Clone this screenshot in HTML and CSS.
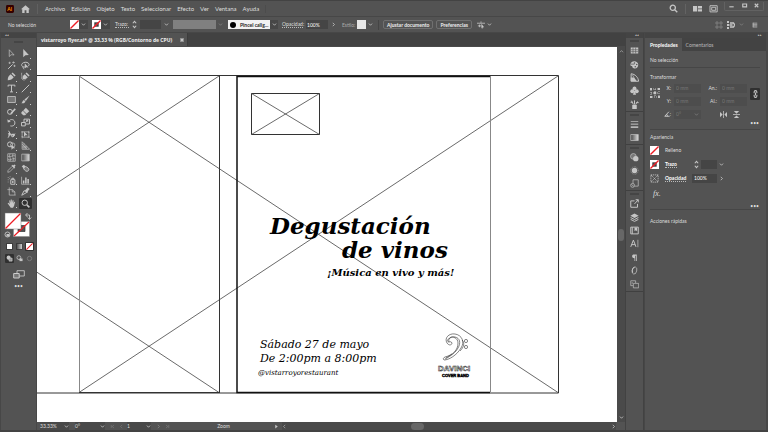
FILE: index.html
```html
<!DOCTYPE html>
<html lang="es">
<head>
<meta charset="utf-8">
<title>vistarroyo flyer.ai</title>
<link rel="stylesheet" href="styles.css">
</head>
<body>
<svg class="defs" aria-hidden="true">
  <symbol id="down" viewBox="0 0 8 8"><path d="M1.5 2.5 4 5.2 6.5 2.5" class="l2"/></symbol>
  <symbol id="right" viewBox="0 0 8 8"><path d="M2.8 1.3 5.5 4 2.8 6.7" class="l2"/></symbol>
  <symbol id="left" viewBox="0 0 8 8"><path d="M5.2 1.3 2.5 4 5.2 6.7" class="l"/></symbol>
  <symbol id="up" viewBox="0 0 8 8"><path d="M1.5 5.2 4 2.5 6.5 5.2" class="l"/></symbol>
  <symbol id="spin" viewBox="0 0 6 10"><path d="M1 3.5 3 1.2 5 3.5M1 6.5 3 8.8 5 6.5" class="l2"/></symbol>
  <symbol id="first" viewBox="0 0 8 8"><path d="M2 1.5v5M6.5 1.5 3.5 4l3 2.5" class="l"/></symbol>
  <symbol id="last" viewBox="0 0 8 8"><path d="M6 1.5v5M1.5 1.5l3 2.5-3 2.5" class="l"/></symbol>
  <symbol id="nofill" viewBox="0 0 10 10"><path fill="#fff" d="M0 0h10v10H0z"/><path d="M.5 9.5 9.5.5" stroke="#ed1c24" stroke-width="1.5"/></symbol>
  <symbol id="nostroke" viewBox="0 0 10 10"><path fill="#fff" d="M0 0h10v10H0z"/><path fill="#333" d="M2.6 2.6h4.8v4.8H2.6z"/><path fill="#999" d="M4 4h2v2H4z"/><path d="M.5 9.5 9.5.5" stroke="#ed1c24" stroke-width="1.5"/></symbol>
</svg>

<header class="menubar">
  <svg class="logo" viewBox="0 0 8 8"><rect width="8" height="8" rx="1.4" fill="#330000"/><text x="1.2" y="6" class="logotext">Ai</text></svg>
  <button class="home" aria-label="Inicio"><svg viewBox="0 0 9 8"><path class="f" d="M4.5.2 0 4.3h1.2V8h2.4V5.2h1.8V8h2.4V4.3H9z"/></svg></button>
  <nav class="menus">
    <button>Archivo</button><button>Edición</button><button>Objeto</button><button>Texto</button><button>Seleccionar</button><button>Efecto</button><button>Ver</button><button>Ventana</button><button>Ayuda</button>
  </nav>
  <div class="headicons">
    <button aria-label="Buscar"><svg viewBox="0 0 9 9"><circle cx="3.8" cy="3.8" r="2.6" class="l2"/><path d="M5.7 5.7 8.3 8.3" class="l2"/></svg></button>
    <i class="vsep"></i>
    <button aria-label="Espacio de trabajo"><svg viewBox="0 0 9 9"><path class="f" d="M0 2h4.2v5.6H0zM5 2h4v2.4H5zM5 5.2h4v2.4H5z"/></svg></button>
    <button aria-label="Pantalla"><svg viewBox="0 0 9 9"><path class="l" d="M1 1.7h7.2v6.2H1z"/><path class="l" d="M2.7 3.3h4v3h-4z"/></svg></button>
  </div>
  <div class="winbtns">
    <button aria-label="Minimizar"><svg viewBox="0 0 8 8"><path d="M1.5 5.5h5" class="l2"/></svg></button>
    <button aria-label="Restaurar"><svg viewBox="0 0 8 8"><path d="M2 2.3h4.4v3.2H2z" class="l2"/></svg></button>
    <button aria-label="Cerrar"><svg viewBox="0 0 8 8"><path d="m2 2 4 4M6 2 2 6" class="l2"/></svg></button>
  </div>
</header>

<section class="control">
  <span class="selection">No selección</span>
  <button class="swatch" aria-label="Relleno"><svg class="sw"><use href="#nofill"/></svg><svg class="car"><use href="#down"/></svg></button>
  <button class="swatch" aria-label="Trazo"><svg class="sw"><use href="#nostroke"/></svg><svg class="car"><use href="#down"/></svg></button>
  <div class="combo stroke"><label for="trazo" class="dotted">Trazo:</label><svg class="spin"><use href="#spin"/></svg><input id="trazo"><svg class="car"><use href="#down"/></svg></div>
  <div class="combo profile"><span class="greybar"></span><svg class="car dim"><use href="#down"/></svg></div>
  <button class="brush"><span class="brushname"><i></i>Pincel calig...</span><svg class="car"><use href="#down"/></svg></button>
  <div class="combo opac"><label for="opa" class="dotted">Opacidad:</label><input id="opa" value="100%"><svg class="car"><use href="#right"/></svg></div>
  <button class="style"><span>Estilo:</span><i></i><svg class="car"><use href="#down"/></svg></button>
  <i class="vsep dark"></i>
  <button class="outlined">Ajustar documento</button>
  <button class="outlined">Preferencias</button>
  <button class="align" aria-label="Alinear"><svg viewBox="0 0 9 9"><path class="l" d="M0 2.5h4M5 2.5h4M1 5.5h4M4.5.5v3M2.8 4v3"/><path class="f" d="m5 3 3 4H6.5L6 8.8 5 8z"/></svg><svg class="car"><use href="#down"/></svg></button>
  <div class="ctlright">
    <svg viewBox="0 0 8 8" class="dim"><path class="l" d="M1 1h2v2H1zM5 1h2v2H5zM1 5h2v2H1zM5 5h2v2H5z"/></svg>
    <svg viewBox="0 0 8 8"><path class="f" d="M0 0h2v2H0zM0 3h2v2H0zM0 6h2v2H0z"/><path class="l2" d="M2.5 4h3M3 2h3.5L8 4 6.500 6H3"/></svg>
    <svg class="dim car"><use href="#down"/></svg>
    <svg viewBox="0 0 8 8" class="list"><path class="l" d="M1 1.500h6M1 3.200h6M1 5h6M1 6.700h6M1.500 1v6"/></svg>
  </div>
</section>

<main class="work">
  <aside class="tools">
    <div class="strip"><span>◂◂</span></div>
    <div class="grip"></div>
    <div class="toolgrid">
      <button aria-label="Selección"><svg viewBox="0 0 12 12"><path class="l" d="M3 1v9l2.500-2.400L9.500 8z"/></svg></button>
      <button class="more" aria-label="Selección directa"><svg viewBox="0 0 12 12"><path class="f" d="M3 0v11l2.800-2.700L10.500 8z"/></svg></button>
      <button aria-label="Varita mágica"><svg viewBox="0 0 12 12"><path class="l2" d="m1.500 10.500 6-6"/><path class="l" d="M8.500.5v3M7 2h3.500M3.500 1v3M2 2.500h3M10 5v3M8.500 6.500h3"/></svg></button>
      <button class="more" aria-label="Lazo"><svg viewBox="0 0 12 12"><path class="l2" d="M5 8C1 8 0 5.500 1.500 3.500S8 .8 10 3s0 3.500-1 4M3 8c-1 1.500 1 2 1 3"/><path class="f" d="M5 3v7l2-1.800 3 .5z"/></svg></button>
      <button class="more" aria-label="Pluma"><svg viewBox="0 0 12 12"><path class="f" d="M1 11c0-4 1-6 4-8l4 4c-2 3-4 3.500-8 4zM6 2l1.500-1.500 4 4L10 6z"/></svg></button>
      <button class="more" aria-label="Curvatura"><svg viewBox="0 0 12 12"><path class="f" d="M2 9c0-3 1-5 3-6l4 4C8 9 5 10 2 9zM6 2l1.500-1.500 4 4L10 6z"/><path class="l" d="M1 1C0 4 2 5 1 7s2 5 5 3"/></svg></button>
      <button class="more" aria-label="Texto"><svg viewBox="0 0 12 12"><path class="l2" d="M1.500 3.500v-2h9v2M6 1.500v9M4 10.500h4"/></svg></button>
      <button class="more" aria-label="Línea"><svg viewBox="0 0 12 12"><path class="l2" d="M1 11 11 1"/></svg></button>
      <button class="more" aria-label="Rectángulo"><svg viewBox="0 0 12 12"><path fill="#777" stroke="#ccc" d="M.8 2h10.400v8H.8z"/></svg></button>
      <button class="more" aria-label="Pincel"><svg viewBox="0 0 12 12"><path class="f" d="m11.500.5-7 5.500 2 2zM4 6.500 6 8.500C5 11 3 11 .5 11 2 10 2 7 4 6.500z"/></svg></button>
      <button class="more" aria-label="Shaper"><svg viewBox="0 0 12 12"><circle cx="4" cy="6.500" r="3.300" class="l2"/><path class="l3" d="m5 9 6-6.500"/></svg></button>
      <button class="more" aria-label="Borrador"><svg viewBox="0 0 12 12"><path class="f" d="M6.500 1 11 5.500 7.500 9 3 4.500zM2.500 5 7 9.500 5.500 11H3L.5 8.500v-1.500z"/></svg></button>
      <button class="more" aria-label="Rotar"><svg viewBox="0 0 12 12"><path class="l2" d="M2.500 4C5 .5 10.500 2 10.500 6.500S6 11 4.500 10.500"/><path class="f" d="M.5 1.500 1 6l4-1z"/></svg></button>
      <button class="more" aria-label="Escala"><svg viewBox="0 0 12 12"><path class="l2" d="M.7 6h5v4.500h-5zM4 6V1.500h7.300v6.500H6M6 5.500l3-2.500M6.700 3H9v2"/></svg></button>
      <button class="more" aria-label="Anchura"><svg viewBox="0 0 12 12"><path class="l2" d="M1 10c3 0 0-4 3-4s1 4 4 3 1-4 3-4M2 1l3 5 5 1"/><path class="f" d="M1 5l3-2v5zM6 5l4 0-1 4z"/></svg></button>
      <button class="more" aria-label="Transformación libre"><svg viewBox="0 0 12 12"><path class="l" d="M1.500 2.500h9v7h-9zM0 2.500h3M9 9.500h3M1.500 8v3M10.500 1v3"/><path class="f" d="M4 2v7l2-2h3z"/></svg></button>
      <button class="more" aria-label="Creador de formas"><svg viewBox="0 0 12 12"><circle cx="4" cy="4.500" r="3.300" class="l2"/><circle cx="7.500" cy="5.500" r="3" class="l"/><path class="f" d="M6 5v6.500l2-2 3 .2z"/></svg></button>
      <button class="more" aria-label="Cuadrícula de perspectiva"><svg viewBox="0 0 12 12"><path class="l" d="M1.500 1v10h10zM1.500 4 8 11M4 3v8M1.500 8h7M6.500 6v5"/></svg></button>
      <button aria-label="Malla"><svg viewBox="0 0 12 12"><path class="l" d="M1 1h10v10H1zM1 4c4 3 6-2 10 0M1 8c4 3 6-2 10 0M4 1c-2 4 2 6 0 10M8 1c-2 4 2 6 0 10"/></svg></button>
      <button aria-label="Degradado"><svg viewBox="0 0 12 12"><linearGradient id="g"><stop stop-color="#444"/><stop offset="1" stop-color="#ddd"/></linearGradient><path fill="url(#g)" stroke="#bbb" d="M1 1.500h10v9H1z"/></svg></button>
      <button class="more" aria-label="Cuentagotas"><svg viewBox="0 0 12 12"><path class="l" d="m1 11 .5-2.500L7 3l2 2-5.500 5.500z"/><path class="f" d="m6 2 4 4 1-1-1-1 1.500-2L10 .5 8 2 7 1z"/></svg></button>
      <button aria-label="Fusión"><svg viewBox="0 0 12 12"><path class="f" d="m1 3 3-2 2.500 3L4 6.500z"/><rect x="4" y="4" width="7" height="5" rx="2.500" transform="rotate(38 7 6)" fill="#777" stroke="#ccc"/></svg></button>
      <button class="more" aria-label="Rociador de símbolos"><svg viewBox="0 0 12 12"><path class="l2" d="M5 5h5.500v6H5zM6.500 5V3h2.500v2"/><circle cx="7.700" cy="8" r="1.200" class="f"/><path class="l" d="M1 2h1.200M3.500 1h1.200M1 5h1.200M3 3.500h1.200M1 8h1"/></svg></button>
      <button class="more" aria-label="Gráfica"><svg viewBox="0 0 12 12"><path class="l" d="M.8 1v10h10.700"/><path class="l3" d="M3.500 10V6M6.500 10V2M9.500 10V4"/></svg></button>
      <button aria-label="Mesa de trabajo"><svg viewBox="0 0 12 12"><path class="l" d="M3 .5v10.300h8.500M.5 3.500H7l3.500 3v4.300M7 3.500v3h3.500"/></svg></button>
      <button class="more" aria-label="Sector"><svg viewBox="0 0 12 12"><path class="l2" d="M1 11 4 5l5 1.500z"/><path class="f" d="m5 5 4-4.500 2.500 2L8 7z"/></svg></button>
      <button class="more" aria-label="Mano"><svg viewBox="0 0 12 12"><path class="f" d="M.8 5.500 2 5l1.500 2L3 2l1.200-.5L5 5V.8h1.300L6.600 5l.9-3.500 1.200.3L8.500 6l1-2.500 1.200.5L9.500 9 8 11.500H5z"/></svg></button>
      <button class="active" aria-label="Zoom"><svg viewBox="0 0 12 12"><circle cx="5" cy="5" r="3.600" class="l2"/><path class="l3" d="m7.800 7.800 3.400 3.400"/></svg></button>
    </div>
    <svg class="fills" viewBox="0 0 37 30">
      <path fill="#fff" stroke="#888" stroke-width=".5" d="M13.500 9.500h16v15h-16z"/><path fill="#535353" stroke="#333" stroke-width=".7" d="M18 13.500h7v6h-7z"/><path stroke="#ed1c24" stroke-width="1.200" d="m14 24 15-14"/>
      <path fill="#fff" stroke="#777" stroke-width=".5" d="M5 1h16v16H5z"/><path stroke="#ed1c24" stroke-width="1.200" d="m5.500 16.500 15-15"/>
      <path class="l" d="M26 3h3.500v4M27.500 1 25.500 3l2 2M27.800 5.500l1.700 2 1.700-2"/>
      <circle cx="7.500" cy="22.500" r="2.500" class="l"/><path class="f" d="M6.500 22h3v2.500h-3z"/>
    </svg>
    <div class="modes">
      <button aria-label="Color"><svg viewBox="0 0 8 8"><path fill="#fff" stroke="#222" d="M.5.500h7v7h-7z"/></svg></button>
      <button aria-label="Degradado"><svg viewBox="0 0 8 8"><path fill="url(#g)" stroke="#333" d="M.5.500h7v7h-7z"/></svg></button>
      <button class="active" aria-label="Ninguno"><svg class="sw"><use href="#nofill"/></svg></button>
    </div>
    <div class="modes draw">
      <button class="active" aria-label="Dibujar normal"><svg viewBox="0 0 8 8"><circle cx="3" cy="3" r="2.300" class="f"/><path fill="#999" stroke="#ddd" stroke-width=".6" d="M3.500 3.500H7V7H3.500z"/></svg></button>
      <button aria-label="Dibujar detrás"><svg viewBox="0 0 8 8"><circle cx="3.300" cy="3" r="2.200" class="l"/><path class="f" d="M4 4h3.500v3H4z"/></svg></button>
      <button class="dim" aria-label="Dibujar dentro"><svg viewBox="0 0 8 8"><circle cx="4" cy="4" r="2.500" class="l"/></svg></button>
    </div>
    <button class="screen" aria-label="Modo de pantalla"><svg viewBox="0 0 12 9"><path class="l" d="M4 .7h7.300V6H4z"/><path fill="#777" stroke="#ccc" d="M.7 3.500h5.500v4.500H.7z"/></svg></button>
    <button class="dots" aria-label="Más">•••</button>
  </aside>

  <section class="doc">
    <div class="tabs"><div class="tab"><span>vistarroyo flyer.ai* @ 33,33 % (RGB/Contorno de CPU)</span><button aria-label="Cerrar documento"><svg viewBox="0 0 8 8"><path d="m2 2 4 4M6 2 2 6" class="l3"/></svg></button></div></div>
    <div class="view">
      <svg class="canvas" viewBox="37 47 580 375" preserveAspectRatio="xMidYMid slice">
        <g class="thin">
          <path class="diag" d="M79 76 558 392.500M79 392.500 558 76M-260 76 219 392.500M-260 392.500 219 76"/>
          <path d="M30 75.500H558.500M30 393H558.500M558.500 75.500V393M219.500 75.500V393" />
          <path class="grey" d="M79.500 75.500V393M490.500 76V392"/>
          <path d="M79 392.500H220"/>
          <path d="M251.500 93.500h68v41h-68z"/><path class="diag" d="m251.500 93.500 68 41M319.500 93.500l-68 41"/>
        </g>
        <path class="artboard" d="M490 76.500H237V392.500H490"/>
        <g class="title"><text x="270" y="234">Degustación</text><text x="342" y="258">de vinos</text></g>
        <text class="sub" x="327" y="276">¡Música en vivo y más!</text>
        <g class="info"><text x="260" y="348">Sábado 27 de mayo</text><text x="260" y="362">De 2:00pm a 8:00pm</text></g>
        <text class="handle" x="258" y="375">@vistarroyorestaurant</text>
        <g class="brand">
          <path d="M447 343c-3-5 2-10 8-9 7 1 10 8 6 14-4 7-12 12-17 12-1-1-1-2 1-3 8-2 13-7 13-14 0-5-5-7-8-5-3 1-3 4-1 4 1 0 2-1 3 1 0 2-3 3-5 0z"/>
          <path d="M449 342c-1-4 2-6 6-5 5 1 6 6 3 11-2 4-7 8-13 11M462 340c3 3 2 7-2 11M446 358l6-4"/>
          <circle cx="466" cy="341" r="1.600"/><circle cx="466" cy="347" r="1.600"/>
          <text class="davinci" x="438" y="371">DAVINCI</text>
          <text class="cover" x="442" y="377">COVER BAND</text>
        </g>
      </svg>
      <div class="vscroll"><svg class="car"><use href="#up"/></svg><i></i><svg class="car"><use href="#down"/></svg></div>
    </div>
    <footer class="status">
      <button class="zoomv">33.33%<svg class="car"><use href="#down"/></svg></button>
      <button class="rotv">0°<svg class="car"><use href="#down"/></svg></button>
      <span class="pages dim"><svg class="car"><use href="#first"/></svg><svg class="car"><use href="#left"/></svg></span>
      <button class="pagev">1<svg class="car"><use href="#down"/></svg></button>
      <span class="pages dim"><svg class="car"><use href="#right"/></svg><svg class="car"><use href="#last"/></svg></span>
      <span class="toolname">Zoom</span>
      <svg class="car" viewBox="0 0 8 8"><path class="f" d="M2 1v6l4-3z"/></svg>
      <div class="hscroll"><svg class="car"><use href="#left"/></svg><i></i><svg class="car"><use href="#right"/></svg></div>
    </footer>
  </section>

  <aside class="dock">
    <div class="strip"><span>◂◂</span></div>
    <div class="group g5"><div class="grip"></div>
      <button aria-label="Muestras"><svg viewBox="0 0 12 12"><path class="f" d="M1 2h10v8H1z"/><path stroke="#555" stroke-width=".8" d="M1 5h10M1 7.500h10M4 2v8M7.500 2v8"/></svg></button>
      <button aria-label="Color"><svg viewBox="0 0 12 12"><path class="f" d="M2 3c3-3 9-1 9 3s-3 6-6 5-1-3-3-3S0 5 2 3z"/><circle cx="6" cy="4" r="1" fill="#555"/><circle cx="9" cy="6" r="1" fill="#555"/><circle cx="7" cy="9" r="1" fill="#555"/><path stroke="#555" d="M1 5.500h5"/></svg></button>
      <button aria-label="Guía de color"><svg viewBox="0 0 12 12"><path class="l2" d="M1.500 1v10h10C11 6 7 1.500 1.500 1z"/><path class="f" d="M1 6h4l4 5H1z"/><path class="l" d="m3 2 5 9"/></svg></button>
      <button aria-label="Símbolos"><svg viewBox="0 0 12 12"><circle cx="6" cy="3.200" r="2.600" class="f"/><circle cx="3" cy="7" r="2.600" class="f"/><circle cx="9" cy="7" r="2.600" class="f"/><path class="f" d="M5.500 6h1l1.500 5.500H4z"/></svg></button>
      <button aria-label="Pinceles"><svg viewBox="0 0 12 12"><path class="f" d="M3 6.500h6V12H3z"/><path class="l2" d="M4.500 6 2 1M6 6V.500M7.500 6 10 2M.8 3h2.500M8.500 3.500h3"/></svg></button>
    </div>
    <div class="group g2"><div class="grip"></div>
      <button aria-label="Trazo"><svg viewBox="0 0 12 12"><path class="l" d="M1 2h10"/><path class="l2" d="M1 5.500h10"/><path class="l3" d="M1 9.500h10"/></svg></button>
      <button aria-label="Degradado"><svg viewBox="0 0 12 12"><path fill="url(#g)" stroke="#bbb" d="M1 2h10v8H1z"/></svg></button>
    </div>
    <div class="group g3"><div class="grip"></div>
      <button aria-label="Transparencia"><svg viewBox="0 0 12 12"><circle cx="4.500" cy="4.500" r="3.800" fill="#777" stroke="#bbb"/><circle cx="7.700" cy="7.500" r="3.600" class="f"/></svg></button>
      <button aria-label="Apariencia"><svg viewBox="0 0 12 12"><circle cx="6" cy="6" r="3.600" class="f"/><circle cx="6" cy="6" r="5" stroke="#aaa" stroke-dasharray="1 1" fill="none"/></svg></button>
      <button aria-label="Estilos gráficos"><svg viewBox="0 0 12 12"><path class="l" d="M4 6V1h7v8.500H6"/><circle cx="3.500" cy="8.500" r="2.600" class="l"/><path class="l" d="M2 7.500 5 9.500"/></svg></button>
    </div>
    <div class="group g7"><div class="grip"></div>
      <button aria-label="Exportar recursos"><svg viewBox="0 0 12 12"><path class="l2" d="M6 2.500H1v8.500h9V6.500M6 6.500l5-5.500M7.500 1H11v3.500"/></svg></button>
      <button aria-label="Capas"><svg viewBox="0 0 12 12"><path class="f" d="m6 .5 5.500 3L6 6.500.5 3.500z"/><path class="l2" d="m.8 6 5.200 2.700L11.200 6M.8 8.500 6 11.200l5.200-2.700"/></svg></button>
      <button aria-label="Bibliotecas"><svg viewBox="0 0 12 12"><path class="l2" d="M1 1.500h10v9H1zM3 1.500v9"/><path class="f" d="M6 2h3.500v5L7.700 5.500 6 7z"/></svg></button>
      <button aria-label="Carácter"><svg viewBox="0 0 12 12"><path class="l2" d="m1 10.500 3.500-9 3.500 9M2.200 7.500h4.600"/><path class="l" d="M10.500 1v10"/></svg></button>
      <button aria-label="Párrafo"><svg viewBox="0 0 12 12"><path class="f" d="M9 2v8.500H8V3.500H7v7H6V7C2 7 2 2 5 2z"/></svg></button>
      <button aria-label="OpenType"><svg viewBox="0 0 12 12"><ellipse cx="6" cy="6" rx="3" ry="4.800" transform="rotate(14 6 6)" class="l"/><path class="l2" d="M3.500 9C2 5 4 2 6 1.500"/></svg></button>
      <button aria-label="Mesas de trabajo"><svg viewBox="0 0 12 12"><path class="l" d="M4 7.500H1V1h6.500v3M3 5V3M4.500 4.500h7v6h-7z"/></svg></button>
    </div>
  </aside>

  <aside class="props">
    <div class="strip end"><span>▸▸</span></div>
    <div class="ptabs"><button class="on">Propiedades</button><button>Comentarios</button></div>
    <div class="sec selsec">No selección</div>
    <div class="sec transform">
      <h2>Transformar</h2>
      <div class="trow">
        <svg class="ref" viewBox="0 0 10 10"><path class="l" stroke-dasharray="1 1" d="M1 1h8v8H1zM5 1v8M1 5h8"/><path class="f" d="M3.800 3.800h2.400v2.400H3.800zM0 0h2v2H0zM8 0h2v2H8zM0 8h2v2H0zM8 8h2v2H8z"/></svg>
        <div class="fields">
          <label for="fx">X:</label><input id="fx" value="0 mm"><label for="fw">An.:</label><input id="fw" value="0 mm">
          <label for="fy">Y:</label><input id="fy" value="0 mm"><label for="fh">Al.:</label><input id="fh" value="0 mm">
          <label for="fa" aria-label="Ángulo"><svg class="anglei" viewBox="0 0 8 8"><path class="l2" d="M7.500 7H1L6.500 1M4.500 7c0-1.500-.5-2.500-1.500-3"/></svg>:</label><span class="angle"><input id="fa" value="0°"><svg class="car dim"><use href="#down"/></svg></span>
          <span></span>
          <span class="flips"><svg viewBox="0 0 8 8"><path class="f" d="M0 1v6l3-3zM8 1v6L5 4z"/><path class="l" d="M4 0v8"/></svg><svg viewBox="0 0 8 8"><path class="f" d="M1 0h6L4 3zM1 8h6L4 5z"/><path class="l" d="M0 4h8"/></svg></span>
        </div>
        <button class="link" aria-label="Restringir proporciones"><svg viewBox="0 0 6 10"><path class="l2" d="M1.300 4V2.500a1.700 1.700 0 0 1 3.400 0V4M1.300 6v1.500a1.700 1.700 0 0 0 3.400 0V6M3 3v4"/></svg></button>
      </div>
      <button class="dots">•••</button>
    </div>
    <div class="sec appear">
      <h2>Apariencia</h2>
      <div class="arow"><svg class="sw"><use href="#nofill"/></svg><span>Relleno</span></div>
      <div class="arow"><svg class="sw"><use href="#nostroke"/></svg><label class="dotted" for="ps">Trazo</label><svg class="spin"><use href="#spin"/></svg><input id="ps"><svg class="car"><use href="#down"/></svg></div>
      <div class="arow"><svg class="sw" viewBox="0 0 10 10"><path class="l" stroke-dasharray="1.500 .8" d="M1 1h8v8H1zM1 1l8 8M9 1 1 9"/></svg><label class="dotted" for="po">Opacidad</label><input id="po" class="wide" value="100%"><svg class="car"><use href="#right"/></svg></div>
      <button class="fxb">fx.</button>
      <button class="dots">•••</button>
    </div>
    <div class="sec quick"><h2>Acciones rápidas</h2></div>
  </aside>
</main>
</body>
</html>
```
FILE: styles.css
```css
* { box-sizing: border-box; }
body {
  margin: 0; height: 100vh; display: flex; flex-direction: column;
  background: #535353; color: #dedede; border-bottom: 2px solid #434343;
  font: 5px/8px Lato, "Open Sans", sans-serif; overflow: hidden;
}
button, input { font: inherit; color: inherit; background: none; border: 0; padding: 0; margin: 0; border-radius: 0; }
button { display: flex; align-items: center; justify-content: center; }
h2 { font: inherit; margin: 0; }
svg { display: block; flex: none; }
.defs { position: absolute; width: 0; height: 0; }
.l, .l2, .l3 { fill: none; stroke: #c6c6c6; stroke-width: 0.9; }
.l2 { stroke-width: 1.3; }
.l3 { stroke-width: 2; }
.f { fill: #c6c6c6; }
.car { width: 5px; height: 5px; }
.sw { width: 9px; height: 9px; }
.spin { width: 5px; height: 9px; }
.dim { opacity: 0.4; }
.vsep { width: 1px; height: 10px; background: #636363; }
.dark { background: #454545; }
.dotted { border-bottom: 1px dotted #bbb; line-height: 6px; }

.menubar { display: flex; align-items: center; height: 16px; flex: none; border-top: 1px solid #434343; padding-left: 6px; }
.logo { width: 8px; height: 8px; }
.logotext { font: bold 5px Lato, sans-serif; fill: #ff9a00; }
.home { margin-left: 7px; padding-right: 7px; border-right: 1px solid #606060; height: 10px; }
.home svg { width: 9px; height: 8px; }
.menus { display: flex; gap: 6px; margin-left: 7px; font-size: 6px; padding-right: 6px; border-right: 1px solid #4c4c4c; }
.headicons { display: flex; gap: 7px; margin-left: auto; align-items: center; }
.headicons svg { width: 9px; height: 9px; }
.winbtns { display: flex; width: 40px; height: 9px; margin: 0 4px 5px 6px; border: 1px solid #626262; border-top: 0; border-radius: 0 0 2px 2px; }
.winbtns button { flex: 1; }
.winbtns svg { width: 7px; height: 7px; }

.control { display: flex; align-items: center; height: 17px; flex: none; border-top: 1px solid #474747; border-bottom: 1px solid #474747; padding-left: 8px; gap: 4px; white-space: nowrap; }
.selection { width: 58px; }
.swatch { width: 18px; height: 9px; background: #474747; gap: 2px; justify-content: flex-start; }
.combo { display: flex; align-items: center; height: 9px; gap: 3px; }
.combo input { width: 21px; height: 9px; background: #454545; }
.stroke { margin-left: 1px; width: 54px; }
.stroke label { width: 14px; }
.profile { gap: 2px; width: 51px; }
.greybar { width: 43px; height: 9px; background: #808080; }
.brush { background: #474747; height: 9px; gap: 2px; width: 50px; justify-content: flex-start; }
.brushname { display: flex; align-items: center; gap: 4px; width: 42px; height: 9px; padding-left: 2px; background: #f2f2f2; color: #222; font-weight: bold; overflow: hidden; }
.brushname i { width: 6px; height: 6px; border-radius: 50%; background: #000; flex: none; }
.opac { width: 56px; }
.opac label { width: 21px; flex: none; }
.opac input { width: 22px; flex: none; padding-left: 1px; color: #fff; }
.style { gap: 2px; color: #aaa; width: 32px; justify-content: flex-start; }
.style i { width: 9px; height: 9px; background: #e6e6e6; }
.outlined { height: 9px; padding: 0 3px; border: 1px solid #707070; border-radius: 2px; color: #eee; font-weight: bold; margin-right: -1px; }
.align { margin-left: 2px; gap: 2px; }
.align svg:first-child { width: 8px; height: 8px; }
.ctlright { margin-left: auto; display: flex; align-items: center; gap: 4px; padding-right: 10px; }
.ctlright svg:not(.car) { width: 8px; height: 8px; }
.ctlright svg.list { margin-left: 4px; width: 6px; }

.work { flex: 1; min-height: 0; display: flex; }
.strip { height: 5px; background: #444; font-size: 3px; line-height: 5px; padding: 0 4px; flex: none; }
.end { text-align: right; }
.grip { width: 9px; height: 2px; background: #454545; align-self: center; flex: none; margin: 2px auto; }

.tools { width: 37px; flex: none; border-left: 1px solid #474747; border-right: 1px solid #474747; display: flex; flex-direction: column; }
.tools .grip { margin: 3px auto 5px; }
.toolgrid { display: grid; grid-template-columns: 13px 13px; column-gap: 1px; grid-template-rows: repeat(14, 1fr); height: 161px; margin-left: 4px; }
.toolgrid svg { width: 9px; height: 9px; }
.toolgrid button { position: relative; }
.more::after { content: ""; position: absolute; right: 1px; bottom: 1px; width: 1px; height: 1px; background: #ccc; }
.active { background: #303030; border-radius: 1px; }
.fills { width: 37px; height: 30px; margin: 3px 0 0 -1px; }
.modes { display: flex; gap: 1px; margin-left: 4px; height: 9px; }
.modes button { width: 9px; height: 9px; }
.modes svg { width: 7px; height: 7px; }
.draw { margin-top: 3px; }
.screen { margin: 7px auto 0 12px; }
.screen svg { width: 12px; height: 9px; }
.tools .dots { margin-top: 3px; }
.dots { font-size: 5px; line-height: 8px; }

.doc { flex: 1; min-width: 0; display: flex; flex-direction: column; }
.tabs { height: 14px; background: #424242; display: flex; flex: none; border-bottom: 1px solid #4a4a4a; }
.tab { background: #535353; display: flex; align-items: center; gap: 7px; padding: 0 2px 0 4px; color: #eee; font-family: "Noto Sans", sans-serif; font-weight: bold; white-space: nowrap; border-right: 1px solid #3c3c3c; }
.tab svg { width: 6px; height: 6px; }
.view { flex: 1; min-height: 0; display: flex; }
.canvas { flex: 1; min-width: 0; height: 100%; background: #fff; }
.vscroll { width: 8px; flex: none; background: #4a4a4a; display: flex; flex-direction: column; align-items: center; justify-content: space-between; padding: 2px 0; }
.vscroll i { width: 6px; height: 12px; border-radius: 3px; background: #676767; }
.thin path { fill: none; stroke: #333; stroke-width: 1; }
.thin .diag { stroke: #444; stroke-width: 0.8; }
.thin .grey { stroke: #888; }
.artboard { fill: none; stroke: #111; stroke-width: 1.5; }
.canvas text { font-family: "DejaVu Serif", serif; font-style: italic; fill: #000; }
.title { font-size: 23px; font-weight: bold; }
.sub { font-size: 10px; font-weight: bold; }
.info { font-size: 11px; }
.handle { font-size: 7px; }
.brand path, .brand circle { fill: none; stroke: #333; stroke-width: 0.6; }
.canvas .davinci { font: bold 8px "Liberation Sans", sans-serif; fill: #fff; stroke: #222; stroke-width: 0.5; }
.canvas .cover { font: bold 4px "Liberation Sans", sans-serif; stroke: #000; stroke-width: 0.4; }

.status { height: 8px; flex: none; display: flex; align-items: center; background: #535353; padding-left: 3px; }
.status button { justify-content: space-between; background: #494949; height: 8px; }
.zoomv { width: 29px; }
.rotv { width: 30px; margin-left: 6px; }
.pagev { width: 24px; }
.pages { display: flex; gap: 4px; padding: 0 3px 0 5px; }
.toolname { flex: none; width: 101px; text-align: center; }
.hscroll { flex: 1; height: 8px; margin: 0 9px 0 3px; background: #4a4a4a; display: flex; align-items: center; justify-content: space-between; }
.hscroll i { width: 13px; height: 7px; border-radius: 4px; background: #676767; margin-right: 64px; }

.dock { width: 19px; flex: none; border-left: 1px solid #424242; border-right: 1px solid #424242; }
.dock .strip { text-align: right; }
.group { display: flex; flex-direction: column; align-items: center; border-bottom: 1px solid #404040; }
.group button { flex: 1; }
.group svg { width: 9px; height: 9px; }
.g5 { height: 74px; }
.g2 { height: 33px; }
.g3 { height: 46px; }
.g7 { height: 101px; }

.props { width: 124px; flex: none; border-right: 2px solid #484848; border-left: 1px solid #474747; }
.ptabs { display: flex; background: #434343; height: 13px; }
.ptabs button { padding: 0 4px; color: #bbb; }
.ptabs .on { background: #535353; color: #fff; font-weight: bold; padding-left: 5px; }
.sec { margin: 0 6px 0 5px; border-bottom: 1px solid #464646; position: relative; }
.selsec { height: 17px; padding-top: 5px; }
.transform { height: 62px; padding-top: 5px; }
.trow { display: flex; margin-top: 2px; }
.ref { width: 10px; height: 10px; margin-top: 5px; }
.fields { display: grid; grid-template-columns: 8px 27px 13px 27px; grid-auto-rows: 10px; row-gap: 3px; column-gap: 3px; margin-left: 3px; align-items: center; }
.fields label { display: flex; justify-content: flex-end; align-items: center; }
.anglei { width: 6px; height: 6px; }
.fields input { width: 100%; height: 9px; background: #4d4d4d; padding-left: 2px; color: #777; }
.angle { display: flex; align-items: center; background: #4d4d4d; }
.angle input { width: 20px; }
.flips { display: flex; gap: 6px; }
.flips svg { width: 7px; height: 7px; }
.link { width: 10px; height: 12px; background: #303030; border-radius: 1px; margin: 5px 0 0 3px; }
.link svg { width: 5px; height: 8px; }
.sec .dots { margin: 0 1px 0 auto; }
.appear { height: 80px; padding-top: 3px; }
.arow { display: flex; align-items: center; height: 14px; }
h2 + .arow { margin-top: 2px; }
.arow span, .arow label { margin-left: 6px; }
.arow label { color: #fff; font-weight: bold; }
.arow .spin { margin: 0 2px 0 auto; }
.arow input { width: 16px; height: 9px; background: #454545; margin-right: 2px; }
.arow .wide { width: 25px; margin-left: auto; color: #fff; padding-left: 2px; }
.arow input + .car { margin-right: 36px; }
.fxb { font: italic 8px/12px "Liberation Serif", serif; margin: 3px 0 0 3px; }
.appear .dots { margin-top: 2px; }
.quick { border: 0; padding-top: 7px; }
```
